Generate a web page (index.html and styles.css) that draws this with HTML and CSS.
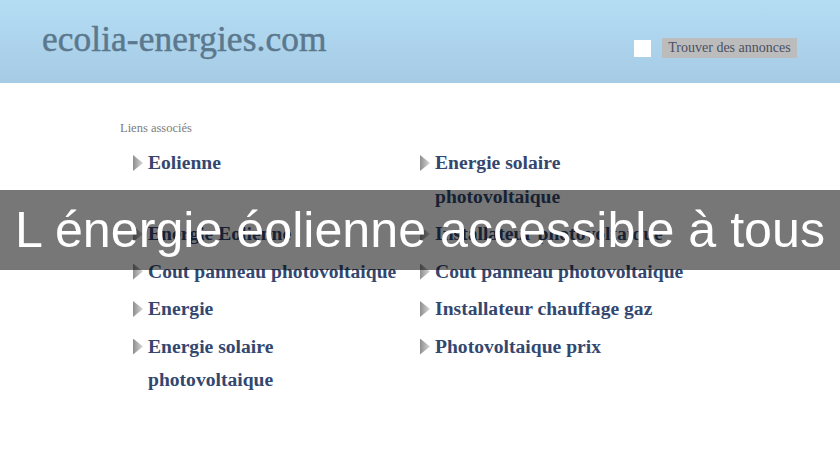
FILE: index.html
```html
<!DOCTYPE html>
<html lang="fr">
<head>
<meta charset="utf-8">
<title>ecolia-energies.com</title>
<link rel="stylesheet" href="styles.css">
</head>
<body>
<header class="header">
  <div class="logo">ecolia-energies.com</div>
  <div class="search">
    <span class="check"></span>
    <span class="btn">Trouver des annonces</span>
  </div>
</header>
<main class="content">
  <div class="label">Liens associés</div>
  <ul class="links">
    <li><span class="arrow"></span><a href="#">Eolienne</a></li>
    <li><span class="arrow"></span><a href="#">Energie solaire photovoltaique</a></li>
    <li><span class="arrow"></span><a href="#">Energie Eolienne</a></li>
    <li><span class="arrow"></span><a href="#">Installateur photovoltaique</a></li>
    <li><span class="arrow"></span><a href="#">Cout panneau photovoltaique</a></li>
    <li><span class="arrow"></span><a href="#">Cout panneau photovoltaique</a></li>
    <li><span class="arrow"></span><a href="#">Energie</a></li>
    <li><span class="arrow"></span><a href="#">Installateur chauffage gaz</a></li>
    <li><span class="arrow"></span><a href="#">Energie solaire photovoltaique</a></li>
    <li><span class="arrow"></span><a href="#">Photovoltaique prix</a></li>
  </ul>
</main>
<div class="banner">L énergie éolienne accessible à tous</div>
</body>
</html>
```
FILE: styles.css
```css
html, body {
  margin: 0;
  padding: 0;
  background: #ffffff;
}
body {
  width: 840px;
  height: 460px;
  overflow: hidden;
  position: relative;
  font-family: "Liberation Serif", serif;
}
.header {
  height: 83px;
  box-sizing: border-box;
  background: linear-gradient(#b4ddf4, #a6cbe5);
  display: flex;
  align-items: flex-start;
  justify-content: space-between;
  padding: 22px 43px 0 42px;
}
.logo {
  font-size: 35.3px;
  line-height: 36px;
  color: #5b788d;
  letter-spacing: 0.1px;
  -webkit-text-stroke: 0.5px #5b788d;
}
.search {
  display: flex;
  align-items: center;
  gap: 11px;
  margin-top: 16px;
}
.check {
  width: 17px;
  height: 17px;
  background: #ffffff;
}
.btn {
  background: #bcbcbc;
  color: #4a5063;
  font-size: 14px;
  line-height: 20px;
  padding: 0 4px;
  width: 127px;
  text-align: center;
  white-space: nowrap;
}
.content {
  padding: 38px 0 0 120px;
}
.label {
  font-size: 12.5px;
  line-height: 14px;
  color: #7c7c7c;
}
.links {
  list-style: none;
  margin: 11px 0 0 13px;
  padding: 0;
  display: grid;
  grid-template-columns: 287px 287px;
  row-gap: 4px;
}
.links li {
  display: flex;
  align-items: flex-start;
}
.arrow {
  flex: none;
  width: 10px;
  height: 16px;
  margin: 9px 5px 0 0;
  background: linear-gradient(90deg, #8e8e8e, #d8d8d8);
  clip-path: polygon(0 0, 100% 50%, 0 100%);
}
.links a {
  font-size: 19.6px;
  font-weight: bold;
  line-height: 33.5px;
  color: #33476f;
  text-decoration: none;
  max-width: 252px;
}
.banner {
  position: absolute;
  left: 0;
  top: 190px;
  width: 840px;
  height: 80px;
  background: rgba(0, 0, 0, 0.535);
  color: #ffffff;
  font-family: "Liberation Sans", Arial, sans-serif;
  font-size: 50.2px;
  line-height: 80px;
  text-align: center;
  white-space: nowrap;
}
```
